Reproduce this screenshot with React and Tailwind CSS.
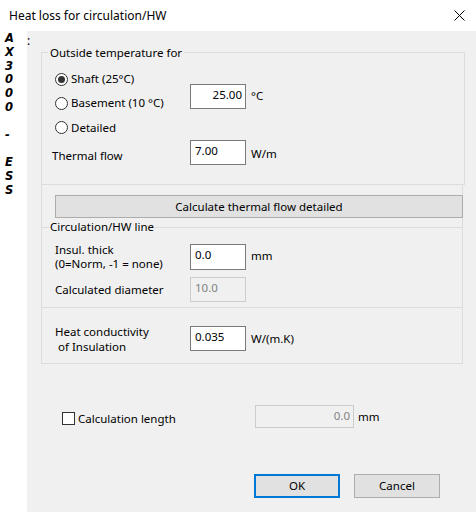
import React from "react";

const font = { fontFamily: '"Segoe UI", "Noto Sans", sans-serif' };

function Radio({ checked, label }) {
  return (
    <div className="flex items-center">
      <div className="w-[13px] h-[13px] rounded-full border border-[#333333] bg-white flex items-center justify-center">
        {checked && <div className="w-[7px] h-[7px] rounded-full bg-[#333333]" />}
      </div>
      <span className="ml-[3px] text-black">{label}</span>
    </div>
  );
}

function Input({ value, right, disabled, w = "w-[56px]", h = "h-[25px]" }) {
  return (
    <div
      className={`${w} ${h} border ${
        disabled ? "border-[#cccccc] bg-[#f0f0f0] text-[#838383]" : "border-[#7a7a7a] bg-white text-black"
      } flex items-start pt-[2px] leading-[16px] ${right ? "justify-end pr-[3px]" : "pl-[4px]"}`}
    >
      {value}
    </div>
  );
}

export default function App() {
  const strip = ["A", "X", "3", "0", "0", "0", "\u00a0", "-", "\u00a0", "E", "S", "S"];
  return (
    <div className="w-[476px] h-[512px] bg-white flex flex-col text-[11.5px] text-black overflow-hidden" style={font}>
      <div className="h-[31px] flex items-center justify-between pl-[9px] pr-[11px] shrink-0">
        <span className="text-[12px] leading-none">Heat loss for circulation/HW</span>
        <svg width="11" height="11" viewBox="0 0 11 11">
          <path d="M0.5 0.5 L10.5 10.5 M10.5 0.5 L0.5 10.5" stroke="#000" strokeWidth="1" />
        </svg>
      </div>
      <div className="flex flex-1">
        <div
          className="w-[27px] shrink-0 bg-white pl-[5px] pt-[1px] flex flex-col text-[11.5px] leading-[13.8px] font-bold italic"
          style={{ fontFamily: '"DejaVu Sans", sans-serif' }}
        >
          {strip.map((c, i) => (
            <span key={i}>{c}</span>
          ))}
        </div>
        <div className="flex-1 bg-[#f0f0f0] relative flex flex-col">
          <span className="absolute left-0 top-[1px] text-[12px]">:</span>
          {/* Group 1 */}
          <div className="ml-[14px] mt-[21px] w-[424px] h-[133px] border border-[#dcdcdc] relative pt-[14px] shrink-0">
            <span className="absolute left-[6px] -top-[8px] bg-[#f0f0f0] px-[2px] leading-[16px]">Outside temperature for</span>
            <div className="flex">
              <div className="w-[148px] pl-[13px] flex flex-col">
                <div className="h-[24px] flex items-center"><Radio checked label="Shaft (25°C)" /></div>
                <div className="h-[24px] flex items-center"><Radio label="Basement (10 °C)" /></div>
                <div className="h-[25px] flex items-center"><Radio label="Detailed" /></div>
              </div>
              <div className="pt-[17px] flex items-start">
                <Input value="25.00" right />
                <span className="ml-[5px] mt-[3px]">°C</span>
              </div>
            </div>
            <div className="flex items-center h-[25px]">
              <span className="w-[148px] pl-[10px] mt-[7px]">Thermal flow</span>
              <Input value="7.00" />
              <span className="ml-[5px] mt-[3px]">W/m</span>
            </div>
          </div>
          {/* Panel 2 */}
          <div className="ml-[14px] -mt-[1px] w-[422px] h-[180px] border border-[#dcdcdc] flex flex-col shrink-0">
            <div className="mt-[10px] ml-[13px] w-[408px] h-[23px] bg-[#e1e1e1] border border-[#adadad] flex items-center justify-center shrink-0">
              Calculate thermal flow detailed
            </div>
            <div className="mt-[9px] border-t border-b border-[#dcdcdc] h-[81px] relative shrink-0">
              <span className="absolute left-[7px] -top-[9px] bg-[#f0f0f0] px-[1px] leading-[16px]">Circulation/HW line</span>
              <div className="flex items-start mt-[16px]">
                <div className="w-[148px] pl-[13px] leading-[14px] -mt-[1px]">
                  <div className="h-[14px]">Insul. thick</div>
                  <div className="h-[14px]">(0=Norm, -1 = none)</div>
                </div>
                <Input value="0.0" h="h-[26px]" />
                <span className="ml-[5px] mt-[3px]">mm</span>
              </div>
              <div className="flex items-center mt-[6px]">
                <span className="w-[148px] pl-[13px] mt-[1px]">Calculated diameter</span>
                <Input value="10.0" disabled />
              </div>
            </div>
            <div className="flex items-start mt-[18px]">
              <div className="w-[148px] pl-[13px] leading-[15px] -mt-[2px]">
                <div className="h-[15px]">Heat conductivity</div>
                <div className="h-[15px]">&nbsp;of Insulation</div>
              </div>
              <Input value="0.035" />
              <span className="ml-[5px] mt-[4px]">W/(m.K)</span>
            </div>
          </div>
          {/* Calculation length */}
          <div className="flex items-center mt-[41px] h-[23px] shrink-0">
            <div className="ml-[35px] mt-[3px] w-[13px] h-[13px] border border-[#333333] bg-white" />
            <span className="ml-[3px] mt-[4px] w-[177px]">Calculation length</span>
            <Input value="0.0" right disabled w="w-[99px]" h="h-[23px]" />
            <span className="ml-[4px]">mm</span>
          </div>
          {/* Buttons */}
          <div className="flex mt-[46px] ml-[227px] gap-[14px] shrink-0">
            <div className="w-[86px] h-[24px] border-2 border-[#0078d7] bg-[#e1e1e1] flex items-center justify-center">OK</div>
            <div className="w-[86px] h-[24px] border border-[#adadad] bg-[#e1e1e1] flex items-center justify-center">Cancel</div>
          </div>
        </div>
      </div>
    </div>
  );
}
